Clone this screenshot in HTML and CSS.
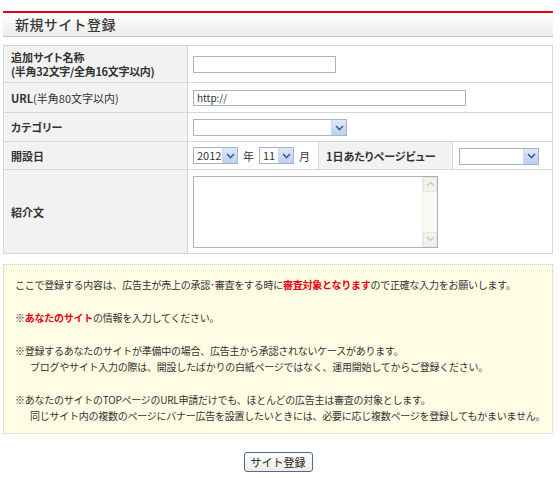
FILE: index.html
```html
<!DOCTYPE html>
<html lang="ja">
<head>
<meta charset="utf-8">
<title>新規サイト登録</title>
<link rel="stylesheet" href="styles.css">
</head>
<body>
<div class="page">
  <h1 class="title">新規サイト登録</h1>
  <table class="form">
    <tr class="r1">
      <th><span class="ln">追加サイト名称</span><span class="ln">(半角32文字/全角16文字以内)</span></th>
      <td colspan="3"><input class="in name" type="text"></td>
    </tr>
    <tr class="r2">
      <th>URL<span class="normal">(半角80文字以内)</span></th>
      <td colspan="3"><input class="in url" type="text" value="http://"></td>
    </tr>
    <tr class="r3">
      <th>カテゴリー</th>
      <td colspan="3"><span class="sel w-cat"><select><option></option></select><span class="arr"><svg width="9" height="6" viewBox="0 0 9 6"><path d="M1 1 L4.5 4.5 L8 1" fill="none" stroke="#3d5f99" stroke-width="1.6"/></svg></span></span></td>
    </tr>
    <tr class="r4">
      <th>開設日</th>
      <td class="date">
        <div class="daterow">
          <span class="sel w-year"><select><option>2012</option></select><span class="arr"><svg width="9" height="6" viewBox="0 0 9 6"><path d="M1 1 L4.5 4.5 L8 1" fill="none" stroke="#3d5f99" stroke-width="1.6"/></svg></span></span>
          <span class="unit">年</span>
          <span class="sel w-month"><select><option>11</option></select><span class="arr"><svg width="9" height="6" viewBox="0 0 9 6"><path d="M1 1 L4.5 4.5 L8 1" fill="none" stroke="#3d5f99" stroke-width="1.6"/></svg></span></span>
          <span class="unit">月</span>
        </div>
      </td>
      <th class="pv">1日あたりページビュー</th>
      <td class="pvcell"><span class="sel w-pv"><select><option></option></select><span class="arr"><svg width="9" height="6" viewBox="0 0 9 6"><path d="M1 1 L4.5 4.5 L8 1" fill="none" stroke="#3d5f99" stroke-width="1.6"/></svg></span></span></td>
    </tr>
    <tr class="r5">
      <th>紹介文</th>
      <td colspan="3">
        <div class="ta">
          <textarea></textarea>
          <div class="sb">
            <div class="sbbtn"><svg width="9" height="6" viewBox="0 0 9 6"><path d="M1 5 L4.5 1.5 L8 5" fill="none" stroke="#c8cbb8" stroke-width="1.4"/></svg></div>
            <div class="sbtrack"></div>
            <div class="sbbtn"><svg width="9" height="6" viewBox="0 0 9 6"><path d="M1 1 L4.5 4.5 L8 1" fill="none" stroke="#c8cbb8" stroke-width="1.4"/></svg></div>
          </div>
        </div>
      </td>
    </tr>
  </table>

  <div class="notice">
    <p>ここで登録する内容は、広告主が売上の承認･審査をする時に<strong class="red">審査対象となります</strong>ので正確な入力をお願いします。</p>
    <p>※<strong class="red">あなたのサイト</strong>の情報を入力してください。</p>
    <p>※登録するあなたのサイトが準備中の場合、広告主から承認されないケースがあります。<br><span class="indent">ブログやサイト入力の際は、開設したばかりの白紙ページではなく、運用開始してからご登録ください。</span></p>
    <p>※あなたのサイトのTOPページのURL申請だけでも、ほとんどの広告主は審査の対象とします。<br><span class="indent">同じサイト内の複数のページにバナー広告を設置したいときには、必要に応じ複数ページを登録してもかまいません。</span></p>
  </div>

  <div class="actions">
    <button class="btn" type="button">サイト登録</button>
  </div>
</div>
</body>
</html>
```

FILE: styles.css
```css
* { box-sizing: border-box; }
html, body { margin: 0; padding: 0; background: #fff; }
body {
  font-family: "Noto Sans CJK JP", "DejaVu Sans", sans-serif;
  font-size: 11px;
  color: #333;
}
.page {
  width: 560px;
  padding: 11px 7px 0 3px;
}
.title {
  margin: 0;
  border-top: 2px solid #e60012;
  border-bottom: 1px solid #c8c8c8;
  background: linear-gradient(#ffffff, #ececec);
  height: 26px;
  line-height: 23px;
  padding-left: 12px;
  font-size: 14px;
  font-weight: 500;
  color: #3a3a3a;
  letter-spacing: 0.4px;
}
.form {
  margin-top: 8px;
  width: 550px;
  border-collapse: collapse;
  font-feature-settings: "palt";
}
.form th, .form td {
  border: 1px solid #d6d6d6;
  padding: 0;
  vertical-align: middle;
}
.form th {
  width: 184px;
  background: #f2f2f2;
  text-align: left;
  padding-left: 7px;
  font-weight: bold;
  color: #333;
  line-height: 14px;
}
.form th .ln { display: block; line-height: 14px; }
.form th .ln + .ln { font-feature-settings: normal; letter-spacing: -0.3px; }
.form th .normal { font-weight: normal; }
.form td { padding-left: 5px; }
.r1 { height: 37px; }
.r2 { height: 30px; }
.r3 { height: 29px; }
.r4 { height: 28px; }
.r5 { height: 84px; }
.form td.date { width: 131px; white-space: nowrap; }
.daterow { display: flex; align-items: center; gap: 5px; }
.form th.pv { width: 134px; padding-left: 7px; }
.form td.pvcell { padding-left: 6px; }

.in {
  display: block;
  height: 17px;
  border: 1px solid #a5b3c6;
  background: #fff;
  font: inherit;
  font-size: 10px;
  padding: 0 3px;
  color: #333;
  outline: none;
}
.in.name { width: 143px; }
.in.url { width: 273px; height: 16px; }

.sel {
  position: relative;
  display: inline-block;
  vertical-align: middle;
  height: 17px;
}
.sel select {
  appearance: none;
  -webkit-appearance: none;
  display: block;
  width: 100%;
  height: 17px;
  border: 1px solid #a5b3c6;
  background: #fff;
  font: inherit;
  font-size: 11px;
  padding: 0 0 0 3px;
  color: #333;
  outline: none;
  border-radius: 0;
  line-height: 15px;
}
.sel .arr {
  position: absolute;
  right: 1px;
  top: 1px;
  width: 15px;
  height: 15px;
  background: linear-gradient(#dde8fb, #bccff2);
  border-left: 1px solid #cdd9ee;
  display: flex;
  align-items: center;
  justify-content: center;
}
.w-cat { width: 154px; }
.w-year { width: 45px; }
.w-month { width: 35px; }
.w-pv { width: 80px; }
.unit { display: inline-block; }

.ta {
  display: flex;
  width: 245px;
  height: 72px;
  border: 1px solid #a5b3c6;
  background: #fff;
}
.ta textarea {
  flex: 1;
  border: 0;
  resize: none;
  outline: none;
  overflow: hidden;
  font: inherit;
  padding: 2px;
  background: #fff;
}
.sb {
  width: 15px;
  display: flex;
  flex-direction: column;
  background: #fafaf4;
  border-left: 1px solid #eeeee4;
}
.sbbtn {
  height: 15px;
  background: #f3f3ea;
  border: 1px solid #e6e6da;
  display: flex;
  align-items: center;
  justify-content: center;
}
.sbtrack { flex: 1; background: #fbfbf6; }

.notice {
  margin-top: 10px;
  width: 550px;
  background: #fffde3;
  border: 1px dotted #c9c9c0;
  padding: 12px 8px 9px 11px;
  line-height: 16px;
  color: #333;
  font-size: 10px;
  letter-spacing: -0.25px;
}
.notice p { margin: 0 0 17px; white-space: nowrap; }
.notice p:last-child { margin-bottom: 0; }
.notice .indent { padding-left: 15px; }
.red { color: #e60012; font-weight: bold; }

.actions {
  display: flex;
  justify-content: center;
  padding-top: 18px;
  width: 550px;
}
.btn {
  height: 20px;
  width: 69px;
  padding: 0;
  font: inherit;
  font-size: 11px;
  color: #222;
  background: linear-gradient(#ffffff, #ecebe6);
  border: 1px solid #4f6a95;
  border-radius: 3px;
  line-height: 17px;
}
```
